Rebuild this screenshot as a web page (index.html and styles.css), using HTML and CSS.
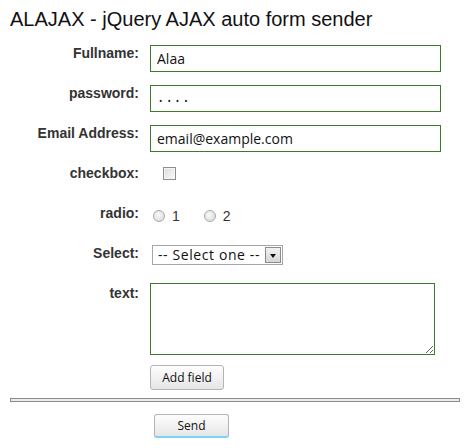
FILE: index.html
```html
<!DOCTYPE html>
<html lang="en">

<head>
    <meta charset="UTF-8">
    <meta name="viewport" content="width=device-width, initial-scale=1.0">
    <title>ALAJAX - jQuery AJAX auto form sender</title>
    <link rel="stylesheet" href="styles.css">
</head>

<body>
    <h1>ALAJAX - jQuery AJAX auto form sender</h1>
    <form id="alajaxForm" action="#" method="post">
        <div class="row">
            <label for="fullname">Fullname:</label>
            <input type="text" id="fullname" name="fullname" value="Alaa">
        </div>
        <div class="row">
            <label for="password">password:</label>
            <input type="password" id="password" name="password" value="1234">
        </div>
        <div class="row">
            <label for="email">Email Address:</label>
            <input type="text" id="email" name="email" value="email@example.com">
        </div>
        <div class="row">
            <label for="check">checkbox:</label>
            <input type="checkbox" id="check" name="check" class="check">
        </div>
        <div class="row">
            <label>radio:</label>
            <div class="radios">
                <input type="radio" id="r1" name="radio" value="1" class="radio"><span>1</span>
                <input type="radio" id="r2" name="radio" value="2" class="radio"><span>2</span>
            </div>
        </div>
        <div class="row">
            <label for="sel">Select:</label>
            <span class="select-wrap">
                <select id="sel" name="sel">
                    <option value="">-- Select one --</option>
                    <option value="1">One</option>
                    <option value="2">Two</option>
                </select>
                <span class="select-arrow"></span>
            </span>
        </div>
        <div class="row row-text">
            <label for="text">text:</label>
            <textarea id="text" name="text"></textarea>
        </div>
        <div class="row row-add">
            <label></label>
            <button type="button" class="btn">Add field</button>
        </div>
        <hr>
        <div class="send-row">
            <button type="submit" class="btn btn-send">Send</button>
        </div>
    </form>
</body>

</html>
```

FILE: styles.css
```css
body {
    font-family: Arial, "Liberation Sans", sans-serif;
    color: #333;
    margin: 0;
    padding: 8px 10px 0 10px;
    background-color: #fff;
}

h1 {
    font-size: 20px;
    font-weight: normal;
    color: #111;
    margin: 0 0 14px 0;
    line-height: 23px;
}

.row {
    display: flex;
    align-items: flex-start;
    height: 40px;
}

.row label {
    width: 129px;
    flex: none;
    text-align: right;
    margin-right: 11px;
    font-size: 14px;
    font-weight: bold;
    line-height: 16px;
    color: #333;
}

.row input[type="text"],
.row input[type="password"] {
    width: 291px;
    height: 27px;
    box-sizing: border-box;
    margin: 0;
    padding: 0 6px;
    border: 1px solid #3d7a2c;
    font-family: "Open Sans", sans-serif;
    font-size: 14px;
    color: #111;
    outline: none;
}

.row input[type="password"] {
    font-size: 9px;
    letter-spacing: 5px;
    padding-top: 4px;
    padding-left: 8px;
}

.check {
    appearance: none;
    width: 13px;
    height: 13px;
    margin: 2px 0 0 13px;
    border: 1px solid #8e8e8e;
    box-sizing: border-box;
    background: linear-gradient(135deg, #dcdcdc, #fbfbfb);
    box-shadow: inset 0 0 0 1px #f4f4f4;
}

.radios {
    display: flex;
    align-items: center;
    margin-top: 3px;
    font-size: 14px;
    color: #333;
}

.radio {
    appearance: none;
    width: 12px;
    height: 12px;
    margin: 0 7px 0 3px;
    border: 1px solid #a8a8a8;
    border-radius: 50%;
    box-sizing: border-box;
    background: radial-gradient(circle at 40% 40%, #fafafa, #d4d4d4);
}

.radios span {
    margin-right: 21px;
}

.radios span:last-child {
    margin-right: 0;
}

.select-wrap {
    position: relative;
    display: inline-block;
    margin-left: 2px;
}

.select-wrap select {
    appearance: none;
    width: 131px;
    height: 20px;
    box-sizing: border-box;
    margin: 0;
    padding: 0 20px 0 5px;
    border: 1px solid #a6a6a6;
    background-color: #fff;
    font-family: "Open Sans", sans-serif;
    font-size: 14px;
    letter-spacing: 0.6px;
    line-height: 18px;
    color: #111;
}

.select-arrow {
    position: absolute;
    top: 2px;
    right: 2px;
    width: 16px;
    height: 16px;
    box-sizing: border-box;
    border: 1px solid #8c8c8c;
    background: linear-gradient(#f2f2f2, #d6d6d6);
    pointer-events: none;
}

.select-arrow::after {
    content: "";
    position: absolute;
    left: 4px;
    top: 6px;
    border-left: 3px solid transparent;
    border-right: 3px solid transparent;
    border-top: 4px solid #111;
}

.row-text {
    height: auto;
    margin-bottom: 10px;
}

.row-text textarea {
    width: 285px;
    height: 72px;
    box-sizing: border-box;
    margin: -2px 0 0 0;
    border: 1px solid #3d7a2c;
    resize: both;
    outline: none;
}

.row-add {
    height: 25px;
}

.btn {
    height: 25px;
    width: 74px;
    padding: 0;
    font-family: "Open Sans", sans-serif;
    font-size: 12px;
    color: #111;
    border: 1px solid #b4b4b4;
    border-radius: 3px;
    background: linear-gradient(#fdfdfd, #e6e6e6);
    cursor: pointer;
}

hr {
    height: 2px;
    margin: 8px 0 0 0;
    padding: 0;
    border: 1px solid #8a8a8a;
    background-color: #ececec;
}

.send-row {
    padding: 12px 0 0 144px;
}

.btn-send {
    width: 75px;
    height: 24px;
    border-bottom: 2px solid #7dd3f2;
}
```
